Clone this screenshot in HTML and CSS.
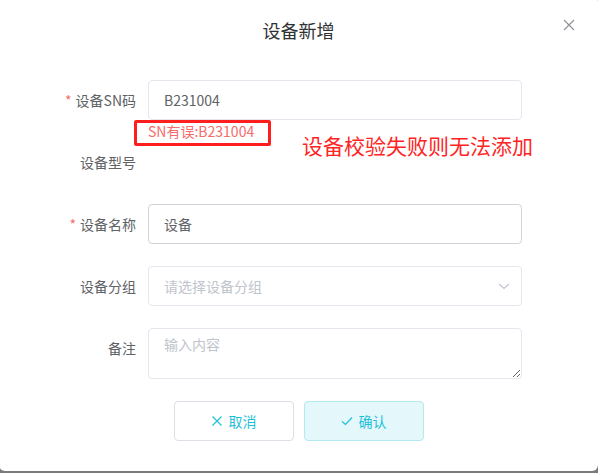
FILE: index.html
```html
<!DOCTYPE html>
<html lang="zh-CN">
<head>
    <meta charset="UTF-8">
    <meta name="viewport" content="width=device-width, initial-scale=1.0">
    <title>设备新增</title>
    <link rel="stylesheet" href="styles.css">
</head>
<body>
    <div class="dialog">
        <div class="dialog-header">
            <span class="dialog-title">设备新增</span>
            <button class="dialog-close" type="button">
                <svg width="12" height="12" viewBox="0 0 12 12"><path d="M1 1L11 11M11 1L1 11" stroke="#909399" stroke-width="1.2" fill="none"/></svg>
            </button>
        </div>
        <form class="form">
            <!-- SN row -->
            <div class="form-item">
                <label class="form-label required">设备SN码</label>
                <div class="form-content">
                    <input type="text" class="form-input" value="B231004">
                    <div class="form-error">SN有误:B231004</div>
                </div>
            </div>
            <div class="form-item">
                <label class="form-label">设备型号</label>
                <div class="form-content"></div>
            </div>
            <div class="form-item">
                <label class="form-label required">设备名称</label>
                <div class="form-content">
                    <input type="text" class="form-input is-focus" value="设备">
                </div>
            </div>
            <div class="form-item">
                <label class="form-label">设备分组</label>
                <div class="form-content select">
                    <input type="text" class="form-input" placeholder="请选择设备分组" readonly>
                    <svg class="select-arrow" width="12" height="12" viewBox="0 0 12 12"><path d="M1 4L6 8.5L11 4" stroke="#c0c4cc" stroke-width="1.1" fill="none"/></svg>
                </div>
            </div>
            <div class="form-item">
                <label class="form-label">备注</label>
                <div class="form-content">
                    <textarea class="form-textarea" placeholder="输入内容"></textarea>
                </div>
            </div>

            <!-- annotation from the screenshot -->
            <div class="mark-box"></div>
            <div class="mark-text">设备校验失败则无法添加</div>
        </form>
        <div class="dialog-footer">
            <button type="button" class="btn">
                <svg width="12" height="12" viewBox="0 0 12 12"><path d="M1.5 1.5L10.5 10.5M10.5 1.5L1.5 10.5" stroke="#1fc0d8" stroke-width="1.2" fill="none"/></svg>
                取消
            </button>
            <button type="button" class="btn btn-primary">
                <svg width="12" height="12" viewBox="0 0 12 12"><path d="M1 6.5L4.5 9.5L11 2.5" stroke="#1fc0d8" stroke-width="1.2" fill="none"/></svg>
                确认
            </button>
        </div>
    </div>
</body>
</html>
```

FILE: styles.css
```css
html, body{
    margin: 0;
    height: 100%;
}
body{
    background-color: #7b7b7b;
    font-family: "Noto Sans CJK SC", "Noto Sans", sans-serif;
    overflow: hidden;
}
.dialog{
    position: relative;
    width: 599px;
    height: 475px;
    margin: -4px 0 0 -1px;
    background-color: #fff;
    border-radius: 6px;
    box-sizing: border-box;
}
.dialog-header{
    height: 84px;
    box-sizing: border-box;
    padding-top: 22px;
    text-align: center;
}
.dialog-title{
    font-size: 18px;
    line-height: 24px;
    color: #303133;
}
.dialog-close{
    position: absolute;
    top: 23px;
    right: 23px;
    padding: 0;
    border: none;
    background: none;
    width: 12px;
    height: 12px;
}
.dialog-close svg{
    display: block;
}
.form{
    position: relative;
    padding: 0 76px 0 49px;
}
.form-item{
    display: flex;
    margin-bottom: 22px;
}
.form-label{
    width: 100px;
    flex: none;
    box-sizing: border-box;
    padding-right: 12px;
    text-align: right;
    font-size: 14px;
    line-height: 40px;
    color: #606266;
}
.form-label.required::before{
    content: "*";
    color: #f56c6c;
    margin-right: 4px;
}
.form-content{
    position: relative;
    flex: 1;
    min-height: 40px;
}
.form-input{
    display: block;
    width: 100%;
    height: 40px;
    box-sizing: border-box;
    padding: 0 15px;
    border: 1px solid #e4e7ed;
    border-radius: 4px;
    font-family: inherit;
    font-size: 14px;
    color: #606266;
    outline: none;
}
.form-input.is-focus{
    border-color: #d0d3da;
}
.form-input::placeholder, .form-textarea::placeholder{
    color: #c0c4cc;
}
.form-error{
    position: absolute;
    top: 100%;
    left: 0;
    font-size: 14px;
    line-height: 22px;
    color: #f56c6c;
}
.select-arrow{
    position: absolute;
    right: 12px;
    top: 14px;
}
.form-textarea{
    display: block;
    width: 100%;
    height: 51px;
    box-sizing: border-box;
    padding: 5px 15px;
    border: 1px solid #e4e7ed;
    border-radius: 4px;
    font-family: inherit;
    font-size: 14px;
    line-height: 20px;
    color: #606266;
    outline: none;
}
.dialog-footer{
    display: flex;
    justify-content: center;
    gap: 10px;
    padding-left: 0;
}
.btn{
    display: flex;
    align-items: center;
    justify-content: center;
    gap: 6px;
    width: 120px;
    height: 40px;
    border: 1px solid #dcdfe6;
    border-radius: 4px;
    background-color: #fff;
    font-family: inherit;
    font-size: 14px;
    color: #1fc0d8;
}
.btn-primary{
    background-color: #e4f7fb;
    border-color: #b4e9f2;
}
.mark-box{
    position: absolute;
    left: 135px;
    top: 40px;
    width: 131px;
    height: 20px;
    border: 3px solid #ff1e1e;
    border-radius: 2px;
}
.mark-text{
    position: absolute;
    left: 303px;
    top: 52px;
    font-size: 21px;
    line-height: 26px;
    color: #ff2424;
}
```
